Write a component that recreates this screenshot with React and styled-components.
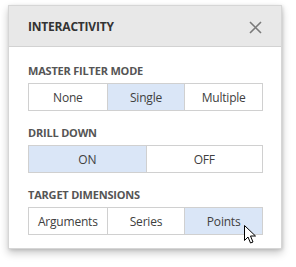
import React from "react";
import styled, { createGlobalStyle } from "styled-components";

const Global = createGlobalStyle`
  html, body { margin: 0; padding: 0; background: #ffffff; }
  body { font-family: "Open Sans", "Noto Sans", sans-serif; }
`;

const Page = styled.div`
  width: 296px;
  height: 267px;
  padding: 5px 0 0 8px;
  box-sizing: border-box;
  position: relative;
`;

const Panel = styled.div`
  width: 274px;
  background: #ffffff;
  border: 1px solid #d6d6d6;
  box-sizing: border-box;
  box-shadow: 0 4px 8px rgba(0, 0, 0, 0.22), 1px 1px 3px rgba(0, 0, 0, 0.12);
`;

const Header = styled.div`
  height: 40px;
  background: #e8e8e8;
  border-bottom: 1px solid #d2d2d2;
  display: flex;
  align-items: center;
  justify-content: space-between;
  padding: 0 19px 0 19px;
`;

const Title = styled.div`
  font-size: 12px;
  font-weight: 700;
  color: #333333;
  letter-spacing: -0.2px;
`;

const Close = styled.button`
  border: 0;
  background: transparent;
  padding: 0;
  width: 14px;
  height: 14px;
  display: flex;
  align-items: center;
  justify-content: center;
  margin-top: 2px;
`;

const Body = styled.div`
  padding: 16px 18px 13px 19px;
  display: flex;
  flex-direction: column;
  gap: 14px;
`;

const Section = styled.div`
  display: flex;
  flex-direction: column;
  gap: 4px;
`;

const Label = styled.div`
  font-size: 11px;
  line-height: 16px;
  font-weight: 700;
  color: #555555;
  letter-spacing: -0.2px;
`;

const Group = styled.div`
  display: grid;
  grid-template-columns: repeat(${(p) => p.$count}, 1fr);
  height: 28px;
  border: 1px solid #d0d0d0;
  box-sizing: border-box;
`;

const Segment = styled.div`
  display: flex;
  align-items: center;
  justify-content: center;
  font-size: 12px;
  color: #404040;
  letter-spacing: -0.2px;
  background: ${(p) => (p.$active ? "#dae6f7" : "#ffffff")};
  border-left: ${(p) => (p.$first ? "none" : "1px solid #d0d0d0")};
  position: relative;
`;

const Cursor = styled.svg`
  position: absolute;
  left: 244px;
  top: 225px;
`;

const groups = [
  { label: "MASTER FILTER MODE", items: ["None", "Single", "Multiple"], active: 1 },
  { label: "DRILL DOWN", items: ["ON", "OFF"], active: 0 },
  { label: "TARGET DIMENSIONS", items: ["Arguments", "Series", "Points"], active: 2 },
];

export default function App() {
  return (
    <>
      <Global />
      <Page>
        <Panel>
          <Header>
            <Title>INTERACTIVITY</Title>
            <Close aria-label="close">
              <svg width="13" height="13" viewBox="0 0 13 13">
                <path d="M1 1 L12 12 M12 1 L1 12" stroke="#7a7a7a" strokeWidth="1.6" fill="none" />
              </svg>
            </Close>
          </Header>
          <Body>
            {groups.map((g) => (
              <Section key={g.label}>
                <Label>{g.label}</Label>
                <Group $count={g.items.length}>
                  {g.items.map((it, i) => (
                    <Segment key={it} $first={i === 0} $active={i === g.active}>
                      {it}
                    </Segment>
                  ))}
                </Group>
              </Section>
            ))}
          </Body>
        </Panel>
        <Cursor width="14" height="20" viewBox="0 0 14 20">
          <path
            d="M0.5 0.5 L0.5 15.5 L4 12 L6.5 18 L9 17 L6.5 11 L11.5 11 Z"
            fill="#ffffff"
            stroke="#000000"
            strokeWidth="1"
            strokeLinejoin="miter"
          />
        </Cursor>
      </Page>
    </>
  );
}
